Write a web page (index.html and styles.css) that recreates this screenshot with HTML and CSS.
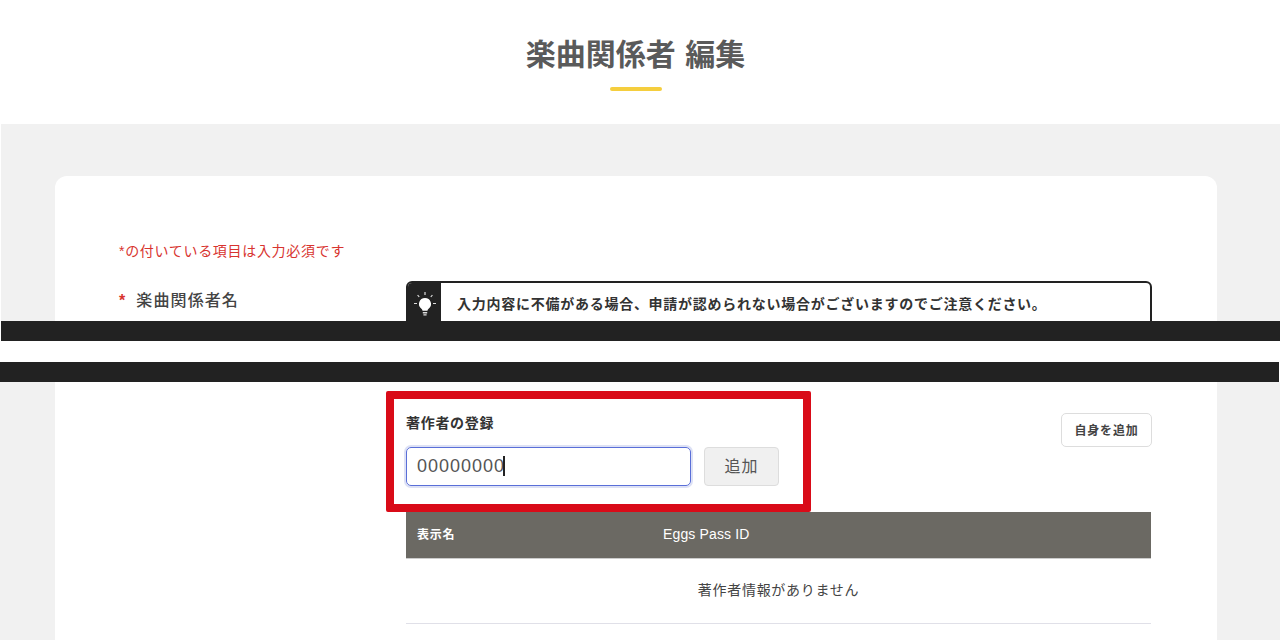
FILE: index.html
```html
<!DOCTYPE html>
<html lang="ja">
<head>
    <meta charset="UTF-8">
    <title>楽曲関係者 編集</title>
    <link rel="stylesheet" href="styles.css">
</head>
<body>
    <div class="slice slice-top">
        <div class="header">
            <h1>楽曲関係者 編集</h1>
            <div class="header-line"></div>
        </div>
        <div class="main main-top">
            <div class="card card-top">
                <p class="required-note">*の付いている項目は入力必須です</p>
                <div class="form-row">
                    <div class="form-label"><span class="mark">*</span>楽曲関係者名</div>
                    <div class="notice">
                        <div class="notice-icon">
                            <svg width="24" height="26" viewBox="0 0 24 26">
                                <path d="M12 7a6 6 0 0 0-3.6 10.8c.8.6 1 1.2 1.1 1.9h5c.1-.7.3-1.3 1.1-1.9A6 6 0 0 0 12 7z" fill="#fff"/>
                                <path d="M9.8 21h4.4v1.4H9.8zM10.4 23.2h3.2v1.4h-3.2z" fill="#ddd"/>
                                <path d="M12 1v3M4.6 4l1.6 2M19.4 4l-1.6 2M1 12.5h3M20 12.5h3" stroke="#ddd" stroke-width="1.2" fill="none"/>
                            </svg>
                        </div>
                        <div class="notice-text">入力内容に不備がある場合、申請が認められない場合がございますのでご注意ください。</div>
                    </div>
                </div>
            </div>
        </div>
    </div>

    <div class="cut-bar cut-bar-first"></div>
    <div class="cut-gap"></div>
    <div class="cut-bar cut-bar-second"></div>

    <div class="slice slice-bottom">
        <div class="main main-bottom">
            <div class="card card-bottom">
                <div class="register-row">
                    <div class="register-block">
                        <div class="highlight"></div>
                        <h2>著作者の登録</h2>
                        <div class="register-controls">
                            <div class="text-input">00000000<span class="caret"></span></div>
                            <button class="btn-add">追加</button>
                        </div>
                    </div>
                    <button class="btn-self">自身を追加</button>
                </div>
                <table class="author-table">
                    <thead>
                        <tr>
                            <th class="col-name">表示名</th>
                            <th class="col-id">Eggs Pass ID</th>
                        </tr>
                    </thead>
                    <tbody>
                        <tr>
                            <td colspan="2">著作者情報がありません</td>
                        </tr>
                    </tbody>
                </table>
            </div>
        </div>
    </div>
</body>
</html>
```

FILE: styles.css
```css
* {
    margin: 0;
    padding: 0;
    box-sizing: border-box;
}

body {
    font-family: "Liberation Sans", "Noto Sans CJK JP", sans-serif;
    background: white;
    color: #333;
    height: 640px;
    overflow: hidden;
}

.slice {
    overflow: hidden;
}

.slice-top {
    height: 321px;
}

.slice-bottom {
    height: 258px;
}

.header {
    height: 124px;
    padding-top: 33px;
    text-align: center;
}

.header h1 {
    font-size: 30px;
    line-height: 44px;
    font-weight: 700;
    word-spacing: 1px;
    color: #5a5a5a;
    margin-left: -9px;
}

.header-line {
    width: 52px;
    height: 4px;
    margin: 10px auto 0;
    position: relative;
    left: -4px;
    background: #f5ce3e;
    border-radius: 2px;
}

.main {
    background: #f1f1f1;
    padding: 0 63px 0 55px;
}

.main-top {
    height: 197px;
    margin-left: 1px;
    padding-left: 54px;
    padding-top: 52px;
}

.main-bottom {
    height: 258px;
}

.card {
    background: white;
    height: 100%;
}

.card-top {
    border-radius: 12px 12px 0 0;
    padding: 64px 65px 0 64px;
    height: 200px;
}

.card-bottom {
    padding: 31px 65px 0 351px;
}

.required-note {
    font-size: 14px;
    line-height: 22px;
    letter-spacing: 0.69px;
    color: #d8342f;
}

.form-row {
    display: flex;
    margin-top: 19px;
}

.form-label {
    width: 287px;
    font-size: 16px;
    line-height: 40px;
    font-weight: 500;
    letter-spacing: 1.1px;
    color: #444;
}

.mark {
    color: #d8342f;
    font-weight: 700;
    margin-right: 10px;
}

.notice {
    flex: 1;
    height: 46px;
    display: flex;
    border: 2px solid #222;
    border-radius: 6px;
    overflow: hidden;
}

.notice-icon {
    width: 33px;
    background: #222;
    display: flex;
    align-items: center;
    justify-content: center;
}

.notice-text {
    padding-left: 16px;
    font-size: 14px;
    line-height: 42px;
    font-weight: 700;
    letter-spacing: 0.74px;
    color: #333;
}

.cut-bar {
    height: 20px;
    background: #222;
}

.cut-bar-first {
    margin-left: 1px;
}

.cut-bar-second {
    margin-right: 1px;
}

.cut-gap {
    height: 21px;
}

.register-row {
    display: flex;
    justify-content: space-between;
    align-items: flex-start;
}

.register-block {
    position: relative;
}

.register-block h2 {
    font-size: 14px;
    line-height: 20px;
    font-weight: 700;
    letter-spacing: 0.7px;
    color: #333;
}

.highlight {
    position: absolute;
    left: -20px;
    top: -22px;
    width: 425px;
    height: 121px;
    border: 8px solid #d90b18;
    border-radius: 2px;
}

.register-controls {
    display: flex;
    gap: 13px;
    margin-top: 14px;
    margin-bottom: 26px;
}

.text-input {
    width: 285px;
    height: 39px;
    padding-left: 10px;
    border: 1px solid #5a6fd8;
    border-radius: 5px;
    box-shadow: 0 0 0 2px #dde1f5;
    font-size: 18px;
    line-height: 37px;
    letter-spacing: 1px;
    color: #555;
}

.caret {
    display: inline-block;
    width: 2px;
    height: 20px;
    margin-left: -2px;
    background: #222;
    vertical-align: -4px;
}

.btn-add {
    width: 75px;
    height: 39px;
    padding-bottom: 3px;
    background: #f0f0f0;
    border: 1px solid #ddd;
    border-radius: 4px;
    font-family: inherit;
    font-size: 16px;
    letter-spacing: 1px;
    color: #555;
}

.btn-self {
    width: 91px;
    height: 34px;
    padding-bottom: 2px;
    background: white;
    border: 1px solid #ddd;
    border-radius: 5px;
    font-family: inherit;
    font-size: 12px;
    font-weight: 700;
    letter-spacing: 0.8px;
    color: #444;
}

.author-table {
    width: 745px;
    border-collapse: collapse;
}

.author-table th {
    height: 46px;
    padding-bottom: 2px;
    background: #6b6963;
    border-bottom: 1px solid #ccc;
    color: white;
    text-align: left;
}

.col-name {
    width: 246px;
    padding-left: 11px;
    font-size: 12px;
    letter-spacing: 0.7px;
}

.col-id {
    padding-left: 11px;
    font-size: 14px;
    font-weight: 400;
    letter-spacing: 0.15px;
}

.author-table td {
    height: 65px;
    padding-bottom: 3px;
    border-bottom: 1px solid #e0e0e8;
    text-align: center;
    font-size: 14px;
    letter-spacing: 0.7px;
    color: #444;
}
```
